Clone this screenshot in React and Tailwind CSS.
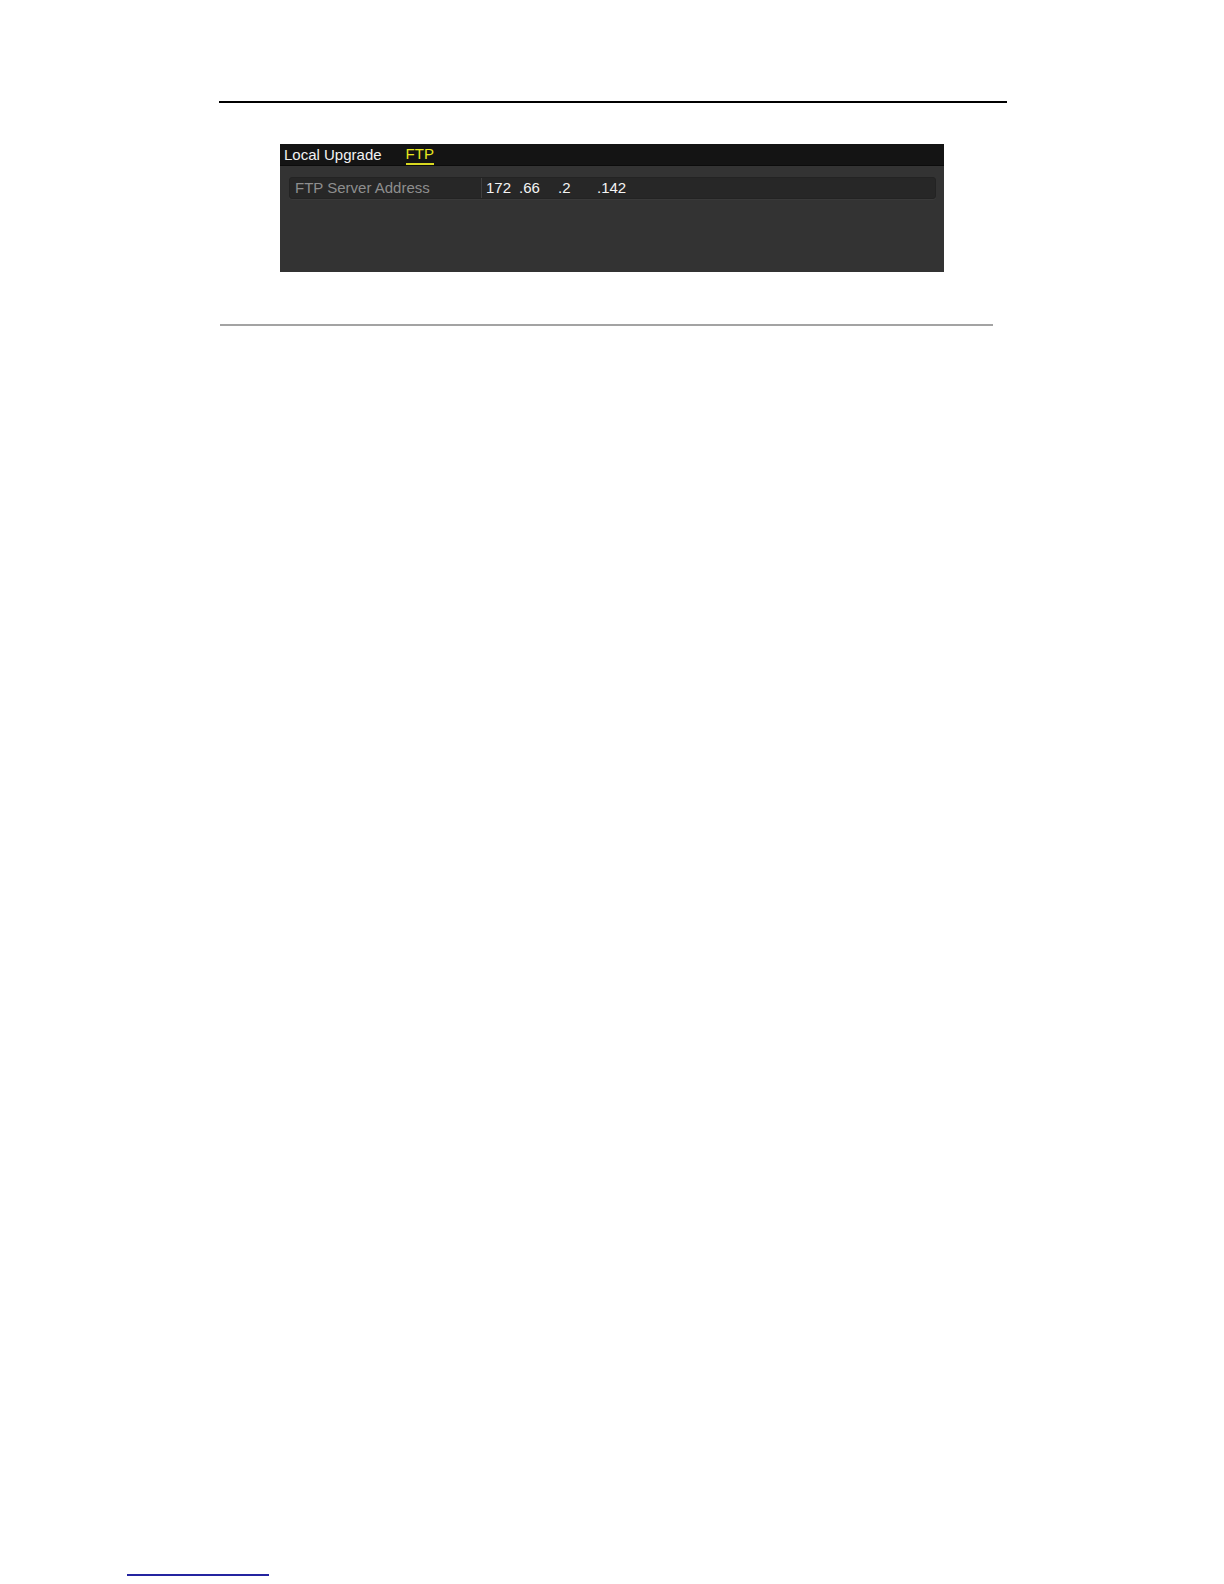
import React from 'react';

const font = { fontFamily: '"Liberation Sans", Arial, sans-serif' };

const octets = [
  { v: '172', w: 'w-[33px]' },
  { v: '.66', w: 'w-[39px]' },
  { v: '.2', w: 'w-[39px]' },
  { v: '.142', w: 'w-[40px]' },
];

const FtpPanel = () => (
  <div className="ml-[280px] w-[664px] h-[128px] bg-[#333333] flex flex-col" style={font}>
    <div className="h-[22px] bg-[#141414] border-b border-[#0c0c0c] flex items-end pl-[4px] gap-[24px] text-[15px] leading-[20px]">
      <span className="text-[#f2f2f2]">Local Upgrade</span>
      <span className="text-[#e8e81e] border-b-2 border-[#d8d820] leading-[17px] pb-[1px]">FTP</span>
    </div>
    <div className="mt-[11px] ml-[9px] mr-[8px] h-[22px] rounded-[3px] bg-[#272727] border border-[#232323] shadow-[0_1px_0_#3a3a3a] flex items-center text-[15px]">
      <div className="w-[192px] h-full border-r border-[#3f3f3f] pl-[5px] flex items-center text-[#8e8e8e]">
        FTP Server Address
      </div>
      <div className="flex items-center pl-[4px] text-[#f4f4f4]">
        {octets.map((o) => (
          <span key={o.v} className={o.w}>{o.v}</span>
        ))}
      </div>
    </div>
  </div>
);

export default function App() {
  return (
    <div className="w-[1224px] h-[1584px] bg-white flex flex-col">
      <div className="mt-[101px] ml-[219px] w-[788px] h-[2px] bg-black" />
      <div className="mt-[41px]">
        <FtpPanel />
      </div>
      <div className="mt-[52px] ml-[220px] w-[773px] h-[2px] bg-[#a3a3a3]" />
      <div className="mt-auto mb-[8px] ml-[127px] w-[142px] h-[2px] bg-[#2424a0]" />
    </div>
  );
}
